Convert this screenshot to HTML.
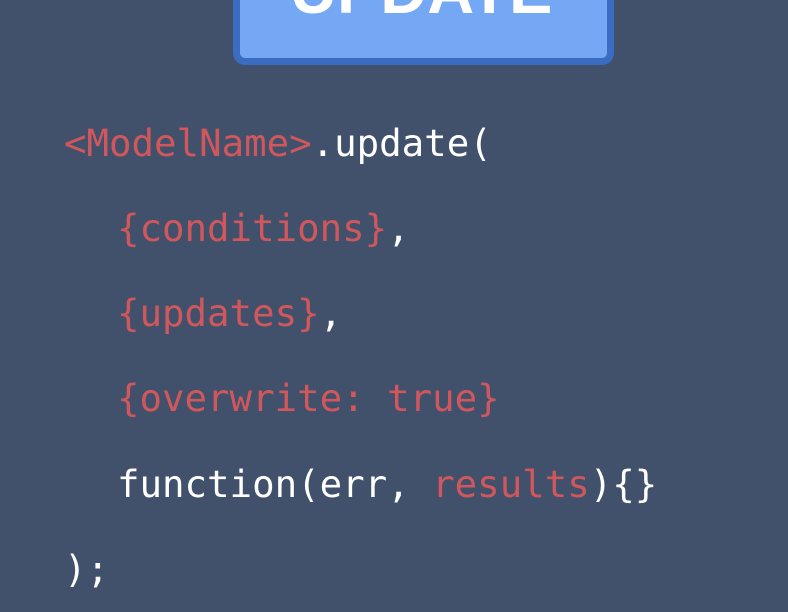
<!DOCTYPE html>
<html><head><style>
html,body{margin:0;padding:0;}
body{width:788px;height:612px;background:#41506b;position:relative;overflow:hidden;font-family:"DejaVu Sans Mono","Liberation Mono",monospace;}
.btn{position:absolute;left:233px;top:-20px;width:367px;height:78px;background:#74a8f4;border:7px solid #3a6cc2;border-top:none;border-radius:0 0 12px 12px;}
.btn span{position:absolute;left:50px;top:-22px;font-family:"Liberation Sans",sans-serif;font-weight:bold;font-size:65px;color:#fff;line-height:65px;white-space:nowrap;}
.l{position:absolute;font-size:37.4px;line-height:37px;color:#fff;white-space:pre;}
.i{left:117px !important;}
.r{color:#d0585c;}
</style></head><body>
<div class="btn"><span>UPDATE</span></div>
<div class="l" style="left:64px;top:125px"><span class="r">&lt;ModelName&gt;</span>.update(</div>
<div class="l i" style="top:210px"><span class="r">{conditions}</span>,</div>
<div class="l i" style="top:295px"><span class="r">{updates}</span>,</div>
<div class="l i" style="top:380px"><span class="r">{overwrite: true}</span></div>
<div class="l i" style="top:466px">function(err, <span class="r">results</span>){}</div>
<div class="l" style="left:64px;top:551px">);</div>
</body></html>
